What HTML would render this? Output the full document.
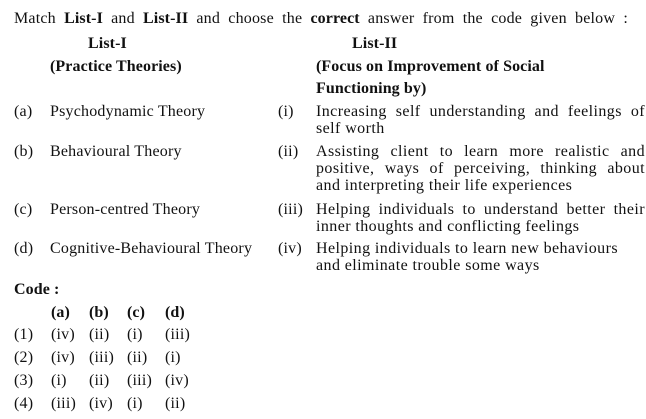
<!DOCTYPE html>
<html><head><style>
body{margin:0;width:646px;height:419px;background:#fff;position:relative;font-family:"Liberation Serif",serif;font-size:16px;letter-spacing:0.2px;color:#111;overflow:hidden}
div{position:absolute;line-height:17px;white-space:nowrap}
div.f{width:329px;text-align:justify;text-align-last:justify;white-space:normal}
div.r{letter-spacing:0.42px}
b{font-weight:bold;letter-spacing:0.1px}
</style></head><body>
<div style="left:14px;top:10px;word-spacing:4px">Match <b>List-I</b> and <b>List-II</b> and choose the <b>correct</b> answer from the code given below :</div>
<div style="left:88px;top:35px"><b>List-I</b></div>
<div style="left:352px;top:35px"><b>List-II</b></div>
<div style="left:50px;top:58px"><b>(Practice Theories)</b></div>
<div style="left:316px;top:58px"><b>(Focus on Improvement of Social</b></div>
<div style="left:316px;top:80px"><b>Functioning by)</b></div>

<div style="left:14px;top:103px">(a)</div>
<div style="left:50px;top:103px">Psychodynamic Theory</div>
<div style="left:278px;top:103px">(i)</div>
<div class="f r" style="left:316px;top:103px">Increasing self understanding and feelings of</div>
<div class="r" style="left:316px;top:120px">self worth</div>

<div style="left:14px;top:143px">(b)</div>
<div style="left:50px;top:143px">Behavioural Theory</div>
<div style="left:278px;top:143px">(ii)</div>
<div class="f r" style="left:316px;top:143px">Assisting client to learn more realistic and</div>
<div class="f r" style="left:316px;top:160px">positive, ways of perceiving, thinking about</div>
<div class="r" style="left:316px;top:177px">and interpreting their life experiences</div>

<div style="left:14px;top:201px">(c)</div>
<div style="left:50px;top:201px">Person-centred Theory</div>
<div style="left:278px;top:201px">(iii)</div>
<div class="f r" style="left:316px;top:201px">Helping individuals to understand better their</div>
<div class="r" style="left:316px;top:218px">inner thoughts and conflicting feelings</div>

<div style="left:14px;top:240px">(d)</div>
<div style="left:50px;top:240px">Cognitive-Behavioural Theory</div>
<div style="left:278px;top:240px">(iv)</div>
<div class="r" style="left:316px;top:240px">Helping individuals to learn new behaviours</div>
<div class="r" style="left:316px;top:257px">and eliminate trouble some ways</div>

<div style="left:14px;top:281px"><b>Code :</b></div>
<div style="left:51px;top:304px"><b>(a)</b></div><div style="left:89px;top:304px"><b>(b)</b></div><div style="left:127px;top:304px"><b>(c)</b></div><div style="left:165px;top:304px"><b>(d)</b></div>

<div style="left:14px;top:326px">(1)</div><div style="left:51px;top:326px">(iv)</div><div style="left:89px;top:326px">(ii)</div><div style="left:127px;top:326px">(i)</div><div style="left:165px;top:326px">(iii)</div>
<div style="left:14px;top:349px">(2)</div><div style="left:51px;top:349px">(iv)</div><div style="left:89px;top:349px">(iii)</div><div style="left:127px;top:349px">(ii)</div><div style="left:165px;top:349px">(i)</div>
<div style="left:14px;top:372px">(3)</div><div style="left:51px;top:372px">(i)</div><div style="left:89px;top:372px">(ii)</div><div style="left:127px;top:372px">(iii)</div><div style="left:165px;top:372px">(iv)</div>
<div style="left:14px;top:395px">(4)</div><div style="left:51px;top:395px">(iii)</div><div style="left:89px;top:395px">(iv)</div><div style="left:127px;top:395px">(i)</div><div style="left:165px;top:395px">(ii)</div>
</body></html>
